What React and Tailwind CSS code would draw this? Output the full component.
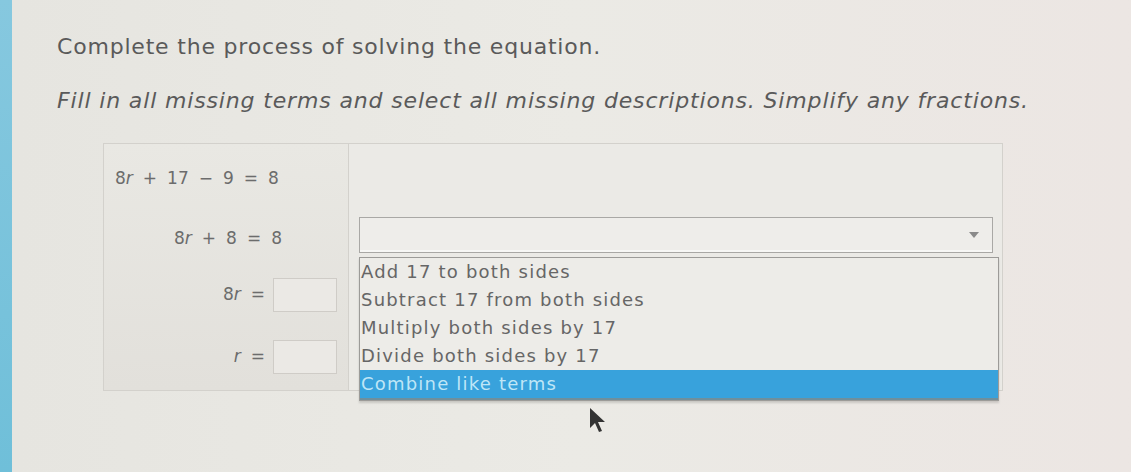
import React from 'react';

const options = [
    'Add 17 to both sides',
    'Subtract 17 from both sides',
    'Multiply both sides by 17',
    'Divide both sides by 17',
    'Combine like terms',
];

const V = ({ children }) => <i className="italic">{children}</i>;

const Eq = ({ parts }) => (
    <div className="flex items-center gap-[10px]">
        {parts.map((p, i) => (
            <span key={i}>{p}</span>
        ))}
    </div>
);

const App = () => {
    return (
        <div
            className="relative w-[1131px] h-[472px] overflow-hidden flex bg-[#e8e7e2] text-[#5a5a5a]"
            style={{ fontFamily: '"DejaVu Sans", Verdana, sans-serif' }}
        >
            <div className="w-[12px] h-full bg-gradient-to-b from-[#86c8df] to-[#6fbfd9] shrink-0" />

            <div className="flex-1 pl-[45px] pt-[33px] bg-gradient-to-r from-[#e6e5e0] via-[#ebeae5] to-[#ece6e3]">
                <p className="text-[22px] leading-[28px] tracking-[0.8px]">Complete the process of solving the equation.</p>
                <p className="mt-[26px] text-[22px] leading-[28px] italic tracking-[0.85px]">
                    Fill in all missing terms and select all missing descriptions. Simplify any fractions.
                </p>

                <div className="mt-[28px] ml-[46px] w-[900px] flex border border-[#d3d1cc]">
                    <div className="w-[245px] shrink-0 border-r border-[#d3d1cc] bg-gradient-to-b from-[#e9e8e3] to-[#e2e0db] text-[17px] text-[#6c6c6c] pb-[2px]">
                        <div className="h-[70px] flex items-center pl-[11px]">
                            <Eq parts={[<>8<V>r</V></>, '+', '17', '−', '9', '=', '8']} />
                        </div>
                        <div className="h-[50px] flex items-center justify-end pr-[66px]">
                            <Eq parts={[<>8<V>r</V></>, '+', '8', '=', '8']} />
                        </div>
                        <div className="h-[62px] flex items-center justify-end pr-[11px] gap-[8px]">
                            <Eq parts={[<>8<V>r</V></>, '=']} />
                            <div className="w-[64px] h-[34px] border border-[#cfccc7] bg-[#ebe9e5]" />
                        </div>
                        <div className="h-[62px] flex items-center justify-end pr-[11px] gap-[8px]">
                            <Eq parts={[<V>r</V>, '=']} />
                            <div className="w-[64px] h-[34px] border border-[#cfccc7] bg-[#ebe9e5]" />
                        </div>
                    </div>

                    <div className="flex-1 bg-[#ebeae6] pl-[10px] pr-[4px]">
                        <div className="h-[73px]" />
                        <div className="w-[634px] h-[36px] border border-[#a9a8a5] bg-[#eeedea] flex items-center justify-end pr-[12px] shadow-[inset_0_-2px_0_#f7f7f5]">
                            <svg width="12" height="8" viewBox="0 0 12 8">
                                <path d="M1 1 L11 1 L6 7 Z" fill="#8a8a8a" />
                            </svg>
                        </div>
                    </div>
                </div>
            </div>

            <div className="absolute left-[359px] top-[257px] w-[640px] border border-[#9c9b98] bg-[#edece8] shadow-[0_2px_2px_rgba(0,0,0,0.15)] text-[18px] tracking-[1.2px] text-[#666] leading-[28px]">
                {options.map((o, i) => (
                    <div
                        key={o}
                        className={i === options.length - 1 ? 'bg-[#38a2dc] text-[#bfe6f7] pl-[1px] border-b-2 border-[#6f8f9c]' : 'pl-[1px]'}
                    >
                        {o}
                    </div>
                ))}
            </div>

            <svg className="absolute left-[588px] top-[406px]" width="22" height="30" viewBox="0 0 22 30">
                <path d="M2 2 L2 22 L7 17 L11 26 L14 25 L10 16 L17 16 Z" fill="#333" />
            </svg>
        </div>
    );
};

export default App;
